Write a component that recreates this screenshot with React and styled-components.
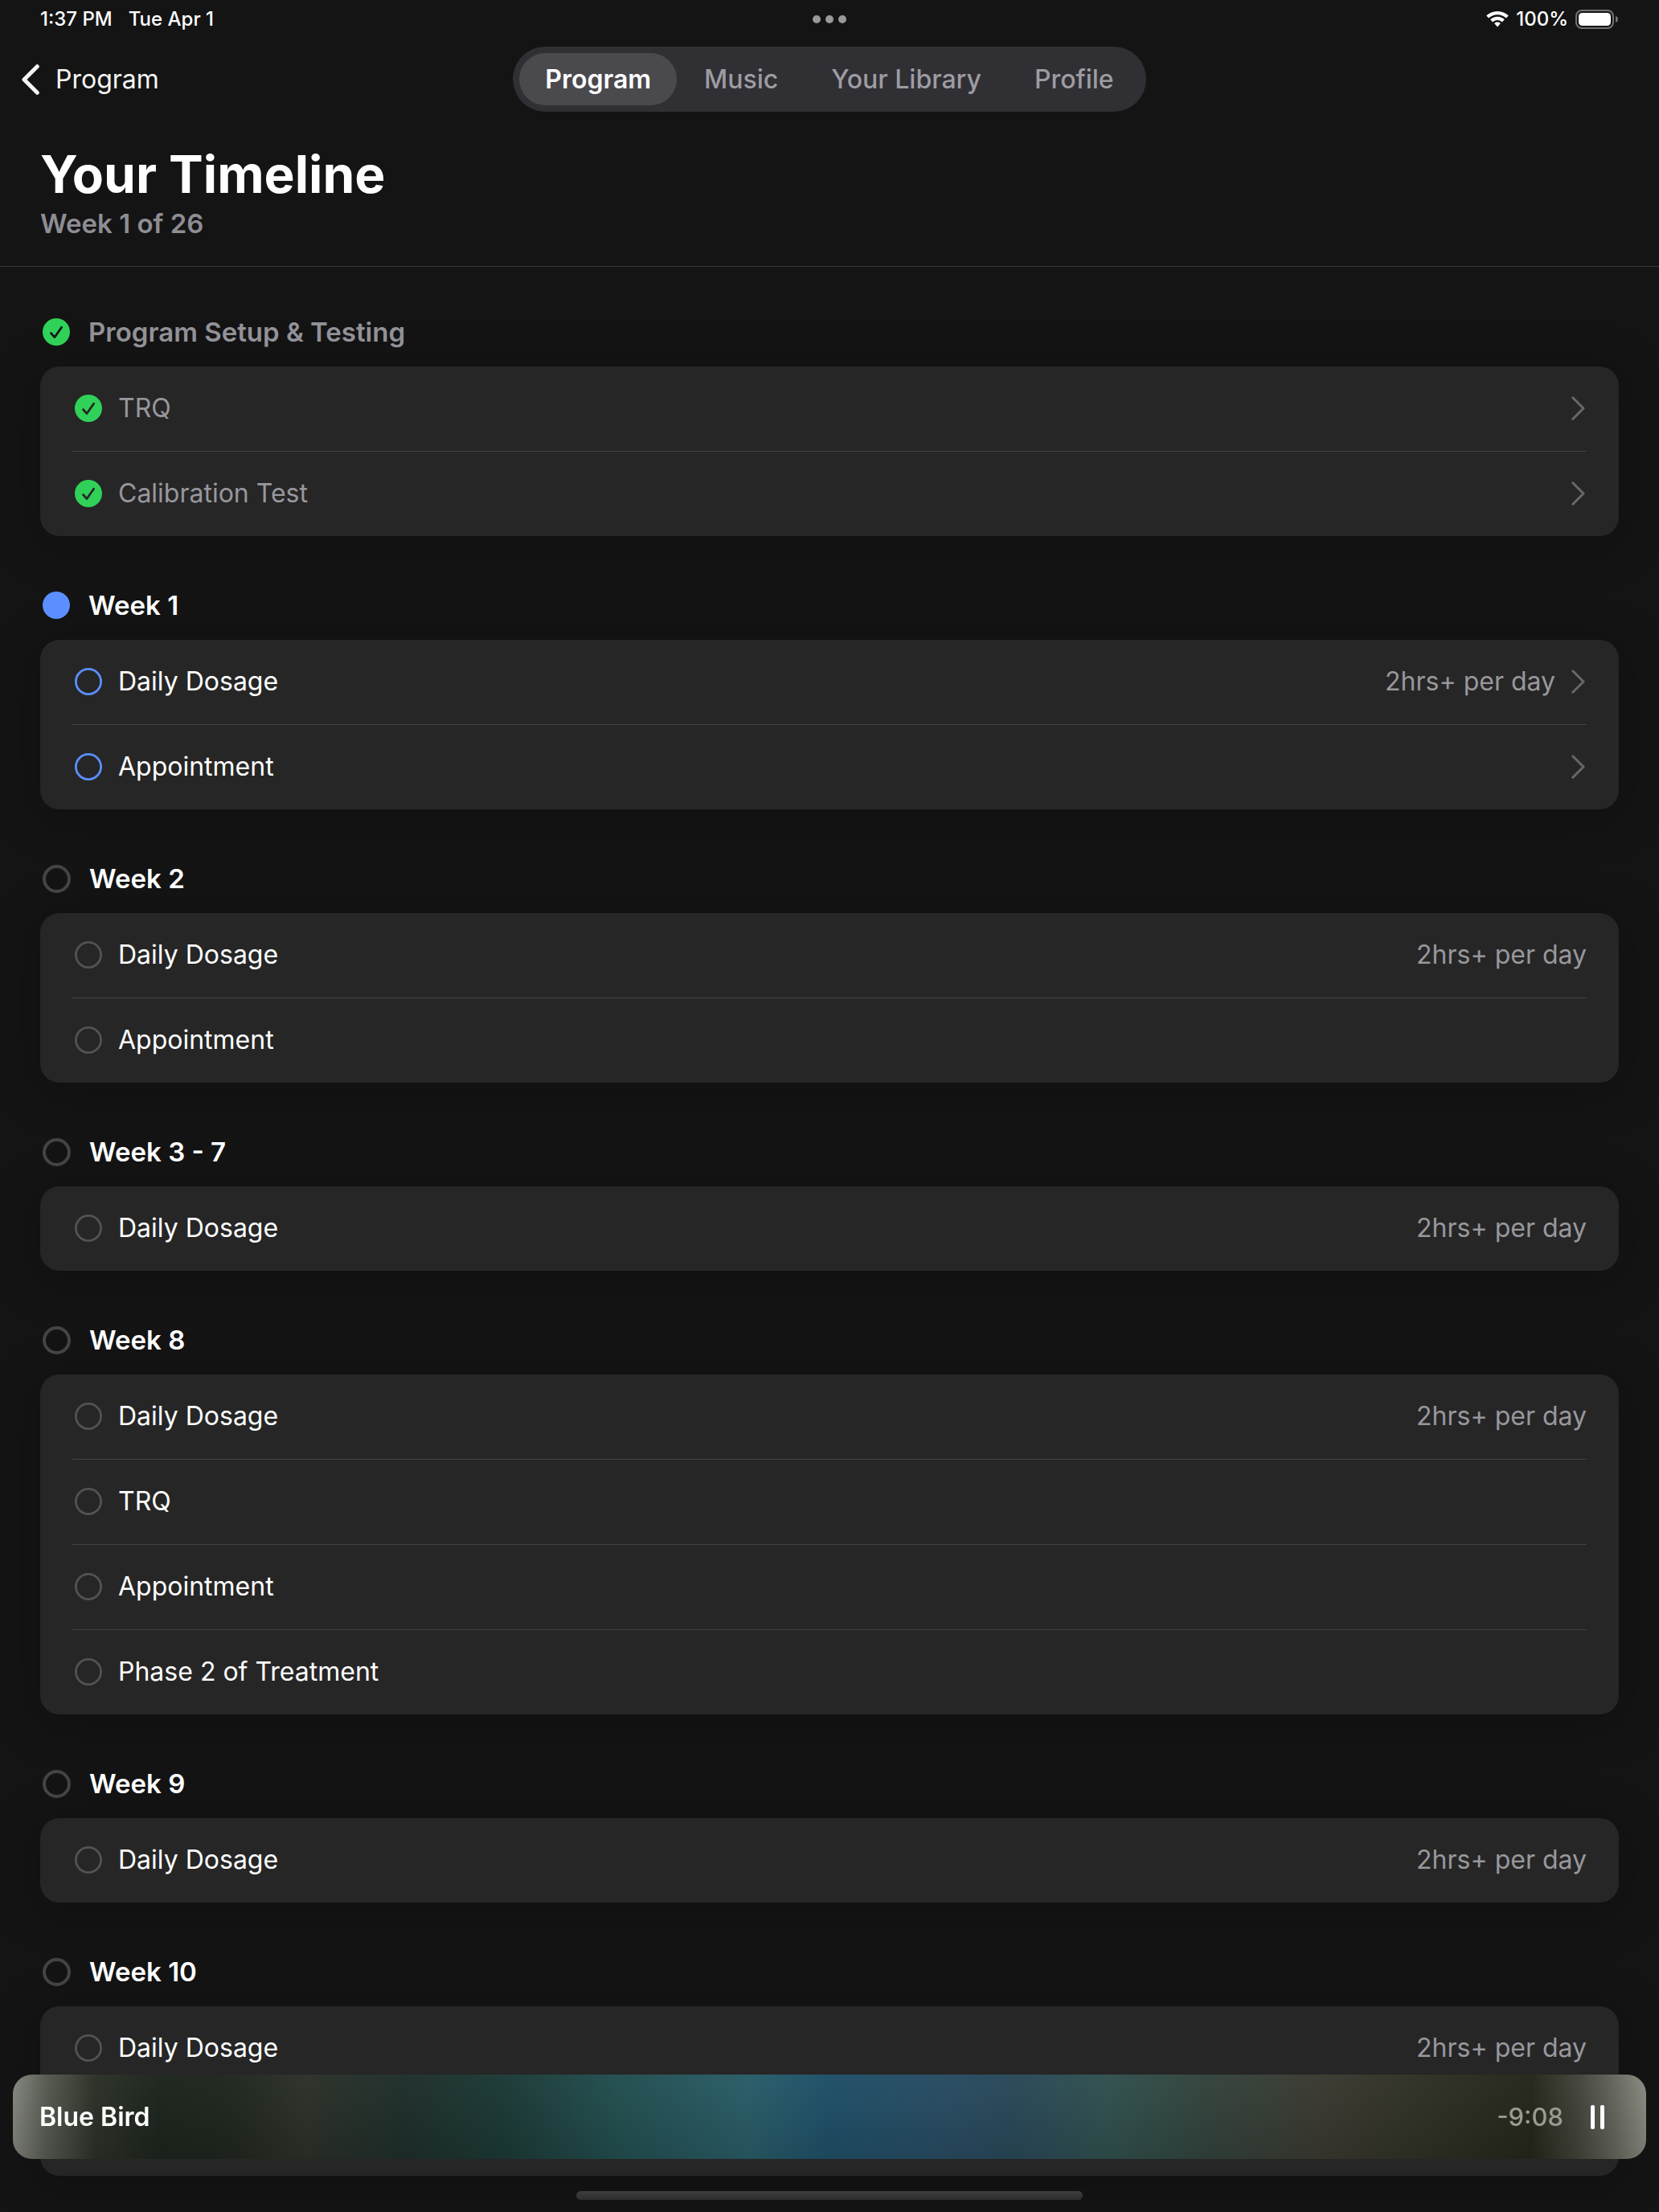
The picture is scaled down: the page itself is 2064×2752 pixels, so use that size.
import styled, { createGlobalStyle, css } from 'styled-components';

const DAILY = '2hrs+ per day';

const tabs = ['Program', 'Music', 'Your Library', 'Profile'];

const sections = [
  {
    title: 'Program Setup & Testing',
    status: 'done',
    items: [
      { label: 'TRQ', link: true },
      { label: 'Calibration Test', link: true },
    ],
  },
  {
    title: 'Week 1',
    status: 'current',
    items: [
      { label: 'Daily Dosage', detail: DAILY, link: true },
      { label: 'Appointment', link: true },
    ],
  },
  {
    title: 'Week 2',
    status: 'upcoming',
    items: [{ label: 'Daily Dosage', detail: DAILY }, { label: 'Appointment' }],
  },
  {
    title: 'Week 3 - 7',
    status: 'upcoming',
    items: [{ label: 'Daily Dosage', detail: DAILY }],
  },
  {
    title: 'Week 8',
    status: 'upcoming',
    items: [
      { label: 'Daily Dosage', detail: DAILY },
      { label: 'TRQ' },
      { label: 'Appointment' },
      { label: 'Phase 2 of Treatment' },
    ],
  },
  {
    title: 'Week 9',
    status: 'upcoming',
    items: [{ label: 'Daily Dosage', detail: DAILY }],
  },
  {
    title: 'Week 10',
    status: 'upcoming',
    items: [{ label: 'Daily Dosage', detail: DAILY }],
    pending: true,
  },
];

function StatusIcon({ status, heading }) {
  if (status === 'done') {
    return (
      <Icon width="34" height="34" viewBox="0 0 34 34">
        <circle cx="17" cy="17" r="17" fill="#30d158" />
        <path
          d="M10.5 18.5 L15 23.6 L23.6 11.2"
          fill="none"
          stroke={heading ? '#141414' : '#262626'}
          strokeWidth="2.7"
          strokeLinecap="round"
          strokeLinejoin="round"
        />
      </Icon>
    );
  }

  if (status === 'current' && heading) {
    return (
      <Icon width="34" height="34" viewBox="0 0 34 34">
        <circle cx="17" cy="17" r="17" fill="#5b8fff" />
      </Icon>
    );
  }

  if (heading) {
    return (
      <Icon width="35" height="35" viewBox="0 0 35 35">
        <circle cx="17.5" cy="17.5" r="15.5" fill="none" stroke="#444444" strokeWidth="4" />
      </Icon>
    );
  }

  return (
    <Icon width="34" height="34" viewBox="0 0 34 34">
      <circle
        cx="17"
        cy="17"
        r="15.6"
        fill="none"
        stroke={status === 'current' ? '#5b8fff' : '#525252'}
        strokeWidth="2.8"
      />
    </Icon>
  );
}

function TimelineRow({ item, status }) {
  return (
    <li>
      <Row as={item.link ? 'a' : 'div'} href={item.link ? '#' : undefined}>
        <StatusIcon status={status} />
        <RowLabel $muted={status === 'done'}>{item.label}</RowLabel>
        {item.detail && <Detail>{item.detail}</Detail>}
        {item.link && (
          <Chevron width="17" height="30" viewBox="0 0 17 30">
            <path
              d="M1.8 1.8 L15 15 L1.8 28.2"
              fill="none"
              stroke="#68686b"
              strokeWidth="3"
              strokeLinecap="round"
              strokeLinejoin="round"
            />
          </Chevron>
        )}
      </Row>
    </li>
  );
}

function App() {
  return (
    <Page>
      <GlobalStyle />

      <StatusBar>
        <Clock>
          <span>1:37 PM</span>
          <span>Tue Apr 1</span>
        </Clock>
        <Dots>
          <i />
          <i />
          <i />
        </Dots>
        <Indicators>
          <svg width="28" height="20" viewBox="0 0 28 20" fill="#fff">
            <path d="M14 0C8.6 0 3.7 2.1.2 5.5l3 3C6 5.8 9.8 4.2 14 4.2s8 1.6 10.8 4.3l3-3C24.3 2.1 19.4 0 14 0Z" />
            <path d="M14 6.8c-3.4 0-6.5 1.3-8.8 3.5l3 3.1c1.5-1.5 3.5-2.4 5.8-2.4s4.3.9 5.8 2.4l3-3.1c-2.3-2.2-5.4-3.5-8.8-3.5Z" />
            <path d="M14 13.6c-1.5 0-2.9.6-3.9 1.5L14 19.6l3.9-4.5c-1-.9-2.4-1.5-3.9-1.5Z" />
          </svg>
          <span>100%</span>
          <svg width="54" height="24" viewBox="0 0 54 24">
            <rect x="1" y="1" width="46" height="22" rx="7" fill="none" stroke="#727272" strokeWidth="2" />
            <rect x="4" y="4" width="40" height="16" rx="4.5" fill="#fff" />
            <path d="M50 8c2 .6 3 2 3 4s-1 3.4-3 4Z" fill="#727272" />
          </svg>
        </Indicators>
      </StatusBar>

      <NavBar>
        <BackButton type="button">
          <svg width="22" height="38" viewBox="0 0 22 38">
            <path
              d="M19.3 2.7 L3 19 L19.3 35.3"
              fill="none"
              stroke="#f5f5f5"
              strokeWidth="5"
              strokeLinecap="round"
              strokeLinejoin="round"
            />
          </svg>
          Program
        </BackButton>
        <Tabs>
          {tabs.map((tab, i) => (
            <Tab key={tab} type="button" $active={i === 0}>
              {tab}
            </Tab>
          ))}
        </Tabs>
      </NavBar>

      <Header>
        <h1>Your Timeline</h1>
        <p>Week 1 of 26</p>
      </Header>

      <Timeline>
        {sections.map(({ title, status, items, pending }) => (
          <section key={title}>
            <SectionTitle $muted={status === 'done'}>
              <StatusIcon status={status} heading />
              {title}
            </SectionTitle>
            <Card>
              {items.map((item) => (
                <TimelineRow key={item.label} item={item} status={status} />
              ))}
              {pending && <PendingRow />}
            </Card>
          </section>
        ))}
      </Timeline>

      <Player>
        <Track>Blue Bird</Track>
        <Remaining>-9:08</Remaining>
        <PauseButton type="button" aria-label="Pause">
          <svg width="18" height="30" viewBox="0 0 18 30">
            <rect x="0" y="0" width="5" height="30" rx="2" fill="#fff" />
            <rect x="12" y="0" width="5" height="30" rx="2" fill="#fff" />
          </svg>
        </PauseButton>
      </Player>
      <HomeIndicator />
    </Page>
  );
}

export default App;

const GlobalStyle = createGlobalStyle`
  * {
    box-sizing: border-box;
  }
  body {
    margin: 0;
    background-color: #141414;
    color: #fff;
    font-family: Inter, 'Liberation Sans', sans-serif;
    font-size: 32px;
    line-height: 42px;
  }
  h1, h2, p, ul {
    margin: 0;
    padding: 0;
  }
`;

const buttonReset = css`
  border: 0;
  padding: 0;
  background: none;
  color: inherit;
  font: inherit;
  cursor: pointer;
`;

const Page = styled.div`
  min-height: 100vh;
`;

const Icon = styled.svg`
  display: block;
  flex: none;
`;

const Chevron = styled(Icon)`
  margin-right: 2px;
`;

const StatusBar = styled.div`
  display: grid;
  grid-template-columns: 1fr auto 1fr;
  align-items: center;
  height: 48px;
  padding: 0 50px;
  font-size: 24px;
  font-weight: 500;
  line-height: 28px;
`;

const Clock = styled.div`
  display: flex;
  gap: 20px;
`;

const Dots = styled.div`
  display: flex;
  gap: 6px;

  i {
    width: 10px;
    height: 10px;
    border-radius: 50%;
    background-color: #999;
  }
`;

const Indicators = styled.div`
  display: flex;
  align-items: center;
  justify-content: flex-end;
  gap: 9px;
`;

const NavBar = styled.nav`
  display: grid;
  grid-template-columns: 1fr auto 1fr;
  align-items: center;
  padding: 10px 27px 0;
`;

const BackButton = styled.button`
  ${buttonReset}
  display: flex;
  align-items: center;
  justify-self: start;
  gap: 20px;
  color: #f5f5f5;
`;

const Tabs = styled.div`
  display: flex;
  gap: 2px;
  padding: 8px;
  border-radius: 41px;
  background-color: #302f34;
`;

const Tab = styled.button`
  ${buttonReset}
  height: 65px;
  padding: 0 32px;
  border-radius: 33px;
  color: #9d9ca2;
  font-weight: 500;

  ${({ $active }) =>
    $active &&
    css`
      background-color: #4a494e;
      color: #fff;
      font-weight: 600;
    `}
`;

const Header = styled.header`
  padding: 38px 50px 32px;
  border-bottom: 1px solid #38383a;

  h1 {
    font-size: 64px;
    font-weight: 700;
    line-height: 80px;
  }
  p {
    color: #8e8d94;
    font-size: 33px;
    font-weight: 600;
  }
`;

const Timeline = styled.main`
  display: flex;
  flex-direction: column;
  gap: 65px;
  padding: 60px 50px 0;
`;

const SectionTitle = styled.h2`
  display: flex;
  align-items: center;
  gap: 23px;
  margin-bottom: 22px;
  padding-left: 3px;
  color: ${({ $muted }) => ($muted ? '#929197' : '#fff')};
  font-size: 33px;
  font-weight: 600;
`;

const Card = styled.ul`
  padding: 0 40px;
  border-radius: 24px;
  background-color: #262626;
  box-shadow: 0 8px 60px rgba(0, 0, 0, 0.25);
  list-style: none;

  li + li {
    border-top: 1px solid #424242;
  }
`;

const Row = styled.div`
  display: flex;
  align-items: center;
  gap: 20px;
  height: 105px;
  padding: 0 0 2px 3px;
  color: #fff;
  text-decoration: none;
`;

const PendingRow = styled.li`
  height: 106px;
`;

const RowLabel = styled.span`
  flex: 1;
  color: ${({ $muted }) => ($muted ? '#98979d' : '#fff')};
`;

const Detail = styled.span`
  color: #98979d;
`;

const Player = styled.div`
  position: fixed;
  right: 16px;
  bottom: 66px;
  left: 16px;
  display: flex;
  align-items: center;
  height: 105px;
  padding: 0 51px 0 33px;
  border-radius: 24px;
  background-image: linear-gradient(to bottom, rgba(255, 255, 255, 0.02), rgba(0, 0, 0, 0.12)),
    linear-gradient(
      to right,
      #85877f 0%,
      #575c53 2%,
      #2c3128 5%,
      #1d251d 9%,
      #20271f 13%,
      #2c3129 18%,
      #1f2f2c 24%,
      #1c3a36 30%,
      #234f50 37%,
      #2a5d68 45%,
      #1f5069 50%,
      #294c63 57%,
      #29495a 61%,
      #31514f 67%,
      #33443d 73%,
      #3b3a31 80%,
      #303126 86%,
      #25271b 93%,
      #45463c 96%,
      #64655c 98%,
      #898b80 100%
    );
`;

const Track = styled.span`
  flex: 1;
  font-weight: 600;
`;

const Remaining = styled.span`
  margin-right: 34px;
  color: #9b9b92;
  font-size: 31px;
  font-weight: 500;
`;

const PauseButton = styled.button`
  ${buttonReset}
  display: flex;
`;

const HomeIndicator = styled.div`
  position: fixed;
  bottom: 15px;
  left: 50%;
  width: 630px;
  height: 11px;
  margin-left: -315px;
  border-radius: 6px;
  background-image: linear-gradient(to bottom, #3e3e3e, #2c2c2c);
`;
